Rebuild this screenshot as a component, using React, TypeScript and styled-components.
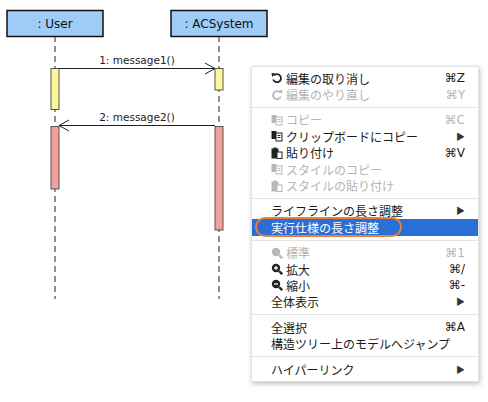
import React from "react";
import styled, { createGlobalStyle } from "styled-components";

const Global = createGlobalStyle`
  html, body { margin: 0; padding: 0; background: #fff; }
  body { font-family: "Noto Sans CJK JP", "Noto Sans", sans-serif; }
`;

const Page = styled.div`
  position: relative;
  width: 488px;
  height: 402px;
  overflow: hidden;
  background: #fff;
`;

const Diagram = styled.svg`
  position: absolute;
  left: 0;
  top: 0;
`;

const Menu = styled.div`
  position: absolute;
  left: 251px;
  top: 66px;
  width: 226px;
  padding: 3px 0 4px;
  background: #fff;
  border: 1px solid #e2e2e2;
  box-shadow: 1px 2px 5px rgba(0, 0, 0, 0.25);
  font-size: 12px;
  color: #1a1a1a;
`;

const Row = styled.div<{ $disabled?: boolean; $active?: boolean }>`
  position: relative;
  display: flex;
  align-items: center;
  height: 16.4px;
  padding: 0 13px 0 19px;
  color: ${(p) => (p.$active ? "#fff" : p.$disabled ? "#b4b4b4" : "#1a1a1a")};
  background: ${(p) => (p.$active ? "#2a6fd6" : "transparent")};
`;

const Icon = styled.span`
  width: 15px;
  display: inline-flex;
  align-items: center;
`;

const Label = styled.span`
  flex: 1;
  white-space: nowrap;
`;

const Key = styled.span`
  font-family: "DejaVu Sans", sans-serif;
  font-size: 12px;
`;

const Arrow = styled.span`
  font-size: 9px;
  color: #333;
`;

const Sep = styled.div`
  height: 1px;
  background: #e4e4e4;
  margin: 4px 0;
`;

const Ring = styled.div`
  position: absolute;
  left: 3px;
  top: -2px;
  width: 143px;
  height: 16px;
  border: 2px solid #ef7f36;
  border-radius: 10px;
`;

const c = (d?: boolean) => (d ? "#b8b8b8" : "#222");

const Undo = ({ d, redo }: { d?: boolean; redo?: boolean }) => (
  <svg width="12" height="12" viewBox="0 0 12 12" style={redo ? { transform: "scaleX(-1)" } : undefined}>
    <path d="M3 3.5 A4 4 0 1 1 2.2 7.5" fill="none" stroke={c(d)} strokeWidth="1.8" />
    <path d="M0.5 1 L4.5 1.5 L1.2 5 Z" fill={c(d)} />
  </svg>
);

const Copy = ({ d }: { d?: boolean }) => (
  <svg width="12" height="12" viewBox="0 0 12 12">
    <rect x="0.5" y="1" width="5" height="8" fill={c(d)} />
    <rect x="5" y="3" width="6" height="8" fill="#fff" stroke={c(d)} />
    <path d="M6.5 5.5h3M6.5 7.5h3" stroke={c(d)} />
  </svg>
);

const Paste = ({ d }: { d?: boolean }) => (
  <svg width="12" height="12" viewBox="0 0 12 12">
    <rect x="0.5" y="1.5" width="7" height="10" fill={c(d)} />
    <rect x="2.5" y="0.5" width="3" height="2" fill={c(d)} />
    <rect x="6" y="5" width="5" height="6.5" fill="#fff" stroke={c(d)} />
  </svg>
);

const Zoom = ({ d, sign }: { d?: boolean; sign?: "+" | "-" }) => (
  <svg width="12" height="12" viewBox="0 0 12 12">
    <circle cx="5" cy="5" r="4.2" fill={c(d)} />
    <path d="M8 8 L11.2 11.2" stroke={c(d)} strokeWidth="2.4" />
    {sign && <path d="M3 5h4" stroke="#fff" strokeWidth="1.3" />}
    {sign === "+" && <path d="M5 3v4" stroke="#fff" strokeWidth="1.3" />}
  </svg>
);

type Item = { icon?: React.ReactNode; label: string; key?: string; sub?: boolean; d?: boolean; active?: boolean };

const groups: Item[][] = [
  [
    { icon: <Undo />, label: "編集の取り消し", key: "⌘Z" },
    { icon: <Undo d redo />, label: "編集のやり直し", key: "⌘Y", d: true },
  ],
  [
    { icon: <Copy d />, label: "コピー", key: "⌘C", d: true },
    { icon: <Copy />, label: "クリップボードにコピー", sub: true },
    { icon: <Paste />, label: "貼り付け", key: "⌘V" },
    { icon: <Copy d />, label: "スタイルのコピー", d: true },
    { icon: <Paste d />, label: "スタイルの貼り付け", d: true },
  ],
  [
    { label: "ライフラインの長さ調整", sub: true },
    { label: "実行仕様の長さ調整", active: true },
  ],
  [
    { icon: <Zoom d />, label: "標準", key: "⌘1", d: true },
    { icon: <Zoom sign="+" />, label: "拡大", key: "⌘/" },
    { icon: <Zoom sign="-" />, label: "縮小", key: "⌘-" },
    { label: "全体表示", sub: true },
  ],
  [
    { label: "全選択", key: "⌘A" },
    { label: "構造ツリー上のモデルへジャンプ" },
  ],
  [{ label: "ハイパーリンク", sub: true }],
];

const Lifeline = ({ x, name }: { x: number; name: string }) => (
  <g>
    <line x1={x} y1={36} x2={x} y2={299} stroke="#222" strokeDasharray="6 4" />
    <rect x={x - 48} y={10.5} width={96} height={26} fill="#9fcbf7" stroke="#111" strokeWidth="1.5" />
    <text x={x} y={28} textAnchor="middle" fontSize="12" fontFamily="'DejaVu Sans', sans-serif" fill="#111">
      {name}
    </text>
  </g>
);

const Act = ({ x, y1, y2, fill }: { x: number; y1: number; y2: number; fill: string }) => (
  <rect x={x - 4} y={y1} width={8} height={y2 - y1} fill={fill} stroke="#555" />
);

export default function App() {
  return (
    <Page>
      <Global />
      <Diagram width="488" height="402">
        <Lifeline x={55} name=": User" />
        <Lifeline x={219} name=": ACSystem" />
        <Act x={55} y1={68.5} y2={109.5} fill="#fbf89a" />
        <Act x={219} y1={68.5} y2={90} fill="#fbf89a" />
        <Act x={55} y1={126.5} y2={189} fill="#f0a19d" />
        <Act x={219} y1={126.5} y2={230} fill="#f0a19d" />
        <line x1={59} y1={68.5} x2={215} y2={68.5} stroke="#222" />
        <path d="M205 63 L215 68.5 L205 74" fill="none" stroke="#222" />
        <text x={137} y={64} textAnchor="middle" fontSize="10.5" fontFamily="'DejaVu Sans', sans-serif" fill="#222">
          1: message1()
        </text>
        <line x1={59} y1={125.5} x2={215} y2={125.5} stroke="#222" />
        <path d="M69 120 L59 125.5 L69 131" fill="none" stroke="#222" />
        <text x={137} y={121} textAnchor="middle" fontSize="10.5" fontFamily="'DejaVu Sans', sans-serif" fill="#222">
          2: message2()
        </text>
      </Diagram>
      <Menu>
        {groups.map((g, gi) => (
          <React.Fragment key={gi}>
            {gi > 0 && <Sep />}
            {g.map((it) => (
              <Row key={it.label} $disabled={it.d} $active={it.active}>
                {it.icon ? <Icon>{it.icon}</Icon> : null}
                <Label>{it.label}</Label>
                {it.key && <Key>{it.key}</Key>}
                {it.sub && <Arrow>▶</Arrow>}
                {it.active && <Ring />}
              </Row>
            ))}
          </React.Fragment>
        ))}
      </Menu>
    </Page>
  );
}
